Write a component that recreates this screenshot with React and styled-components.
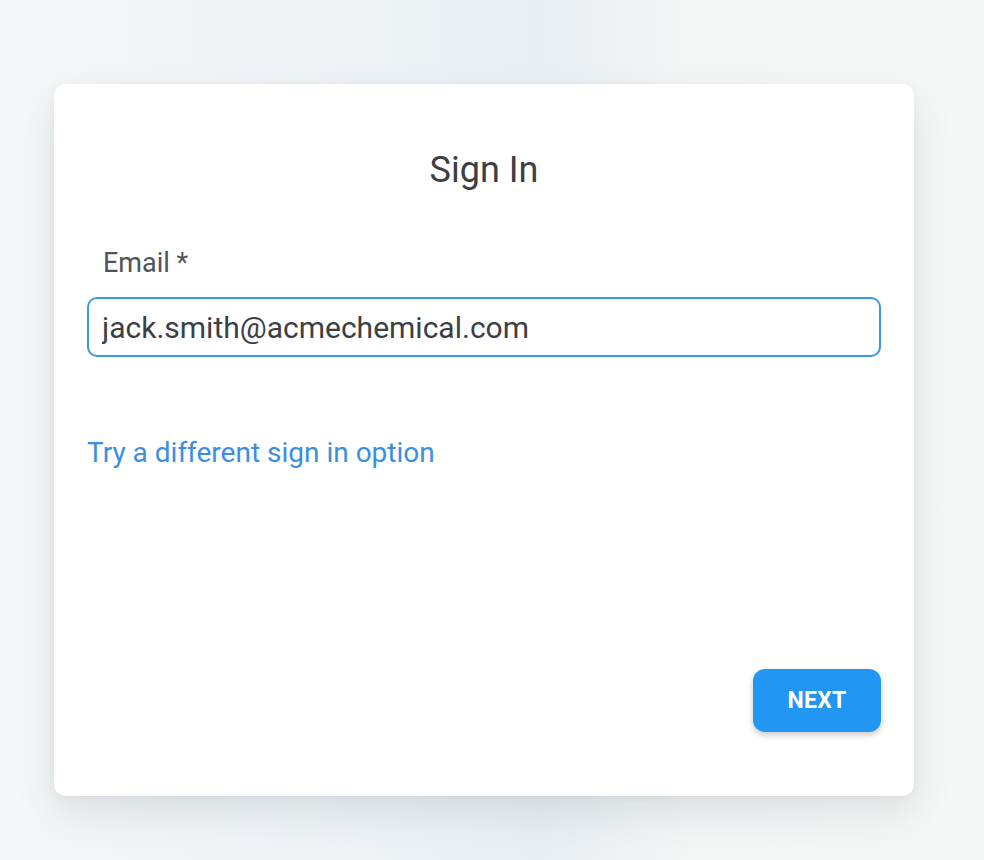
import React, { useState } from 'react'
import styled, { createGlobalStyle } from 'styled-components'

const GlobalStyle = createGlobalStyle`
	html, body {
		margin: 0;
		padding: 0;
		height: 100%;
	}
	body {
		font-family: Roboto, "Liberation Sans", Arial, sans-serif;
		background: #f2f5f7;
	}
`

const Page = styled.div`
	width: 984px;
	height: 860px;
	box-sizing: border-box;
	padding: 84px 70px 0 54px;
	background: linear-gradient(90deg, #f5f7f8 0%, #eef2f5 40%, #e9eef2 55%, #f4f6f6 70%, #f6f7f7 100%);
`

const Card = styled.div`
	width: 860px;
	height: 712px;
	box-sizing: border-box;
	background: #fff;
	border-radius: 12px;
	box-shadow: 0 18px 40px rgba(60, 70, 80, 0.12), 0 2px 8px rgba(60, 70, 80, 0.06);
	padding: 64px 33px 64px 33px;
	display: flex;
	flex-direction: column;
`

const Title = styled.h1`
	margin: 0;
	text-align: center;
	font-size: 36px;
	font-weight: 400;
	color: #3c3f44;
	line-height: 44px;
`

const Label = styled.label`
	margin: 55px 0 0 16px;
	font-size: 27px;
	color: #505458;
	line-height: 32px;
`

const Input = styled.input`
	margin-top: 18px;
	height: 60px;
	box-sizing: border-box;
	border: 2px solid #3a98e8;
	border-radius: 10px;
	padding: 0 13px;
	font-family: inherit;
	font-size: 30px;
	color: #3c3f44;
	outline: none;
`

const Link = styled.a`
	margin-top: 80px;
	font-size: 28px;
	color: #3b8fe0;
	text-decoration: none;
	line-height: 32px;
	align-self: flex-start;
	cursor: pointer;
`

const Footer = styled.div`
	margin-top: auto;
	display: flex;
	justify-content: flex-end;
`

const Button = styled.button`
	width: 128px;
	height: 63px;
	border: none;
	border-radius: 12px;
	background: #2196f3;
	color: #fff;
	font-family: inherit;
	font-size: 23px;
	font-weight: 700;
	letter-spacing: 0.2px;
	box-shadow: 0 3px 6px rgba(0, 0, 0, 0.22);
	cursor: pointer;
`

const App = () => {
	const [email, setEmail] = useState('jack.smith@acmechemical.com')

	return (
		<>
			<GlobalStyle />
			<Page>
				<Card>
					<Title>Sign In</Title>
					<Label htmlFor="email">Email *</Label>
					<Input id="email" value={email} onChange={e => setEmail(e.target.value)} />
					<Link>Try a different sign in option</Link>
					<Footer>
						<Button>NEXT</Button>
					</Footer>
				</Card>
			</Page>
		</>
	)
}

export default App
